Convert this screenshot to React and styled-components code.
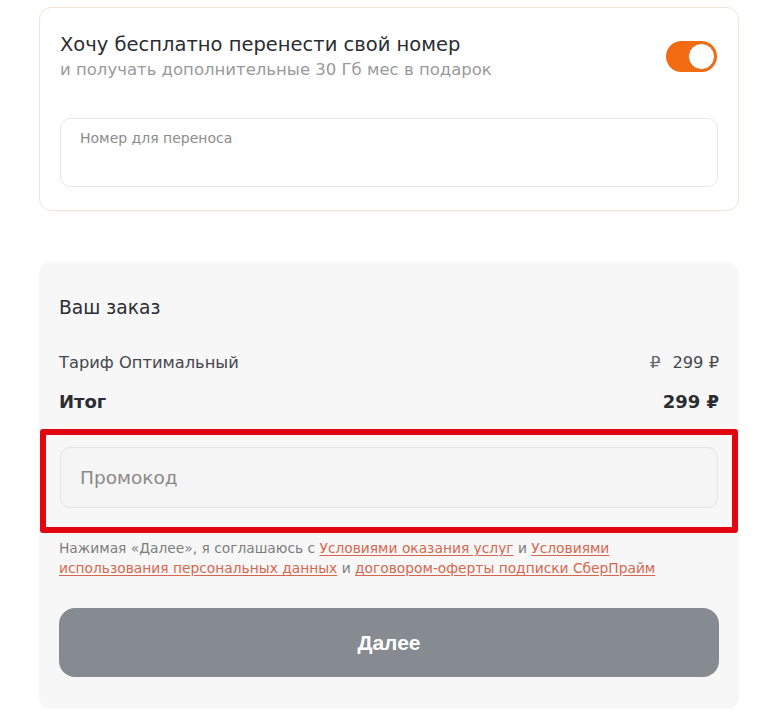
import React from 'react'
import styled, { createGlobalStyle } from 'styled-components'

const GlobalStyle = createGlobalStyle`
  body {
    margin: 0;
    background: #ffffff;
    font-family: "DejaVu Sans", "Open Sans", sans-serif;
  }
  * { box-sizing: border-box; }
`

const Page = styled.div`
  width: 778px;
  padding: 7px 39px 16px 39px;
  display: flex;
  flex-direction: column;
  gap: 51px;
`

const PortCard = styled.div`
  border: 1px solid #f3e4d6;
  border-radius: 12px;
  background: #fff;
  padding: 24px 20px 23px 20px;
`

const PortHead = styled.div`
  display: flex;
  justify-content: space-between;
  align-items: flex-start;
`

const Title = styled.div`
  font-size: 19.5px;
  line-height: 25px;
  color: #2b2d33;
`

const Sub = styled.div`
  font-size: 16.5px;
  line-height: 26px;
  color: #9a9a9a;
`

const Toggle = styled.div`
  width: 51px;
  height: 31px;
  border-radius: 16px;
  background: #f26b10;
  display: flex;
  align-items: center;
  justify-content: flex-end;
  padding: 2px;
  margin-top: 9px;
  margin-right: 1px;
`

const Knob = styled.div`
  width: 27px;
  height: 27px;
  border-radius: 50%;
  background: #fff;
  border: 1px solid #d66a20;
`

const Field = styled.div`
  margin-top: 35px;
  height: 69px;
  border: 1px solid #e8e8e8;
  border-radius: 10px;
  padding: 10px 19px;
  font-size: 14px;
  line-height: 18px;
  color: #8c8c8c;
`

const OrderCard = styled.div`
  background: #f7f7f7;
  border-radius: 12px;
  padding: 32px 20px 32px 20px;
`

const OrderTitle = styled.div`
  font-size: 18.7px;
  line-height: 27px;
  color: #2b2d33;
  margin-bottom: 29px;
`

const Row = styled.div`
  display: flex;
  justify-content: space-between;
  align-items: center;
  font-size: ${p => (p.$total ? '18px' : '16.3px')};
  font-weight: ${p => (p.$total ? 700 : 400)};
  line-height: 26px;
  color: ${p => (p.$total ? '#2b2d33' : '#45474d')};
  margin-bottom: ${p => (p.$total ? '0' : '13px')};
`

const Price = styled.span`
  display: flex;
  gap: 12px;
`

const Strike = styled.span`
  text-decoration: line-through;
  color: #666;
`

const Highlight = styled.div`
  margin: 14px -19px 0 -19px;
  border: 6px solid #e30611;
  border-radius: 3px;
  padding: 12px 14px 19px 14px;
`

const Promo = styled.div`
  height: 61px;
  border: 1px solid #e4e4e4;
  border-radius: 10px;
  background: #f5f5f5;
  display: flex;
  align-items: center;
  padding: 0 19px;
  font-size: 18.5px;
  color: #8a8a8a;
`

const Terms = styled.p`
  margin: 5px 0 0 0;
  font-size: 13.8px;
  line-height: 20px;
  color: #7d7d7d;
`

const Link = styled.a`
  color: #d5674f;
  text-decoration: underline;
  text-underline-offset: 2px;
`

const Button = styled.button`
  margin-top: 30px;
  width: 100%;
  height: 69px;
  border: none;
  border-radius: 16px;
  background: #858b90;
  color: #fff;
  font-family: "Liberation Sans", Arial, sans-serif;
  font-weight: 700;
  font-size: 21px;
`

export default function App() {
  return (
    <>
      <GlobalStyle />
      <Page>
        <PortCard>
          <PortHead>
            <div>
              <Title>Хочу бесплатно перенести свой номер</Title>
              <Sub>и получать дополнительные 30 Гб мес в подарок</Sub>
            </div>
            <Toggle><Knob /></Toggle>
          </PortHead>
          <Field>Номер для переноса</Field>
        </PortCard>

        <OrderCard>
          <OrderTitle>Ваш заказ</OrderTitle>
          <Row>
            <span>Тариф Оптимальный</span>
            <Price><Strike>₽</Strike><span>299 ₽</span></Price>
          </Row>
          <Row $total>
            <span>Итог</span>
            <span>299 ₽</span>
          </Row>
          <Highlight>
            <Promo>Промокод</Promo>
          </Highlight>
          <Terms>
            Нажимая «Далее», я соглашаюсь с <Link>Условиями оказания услуг</Link> и <Link>Условиями</Link><br />
            <Link>использования персональных данных</Link> и <Link>договором-оферты подписки СберПрайм</Link>
          </Terms>
          <Button>Далее</Button>
        </OrderCard>
      </Page>
    </>
  )
}
